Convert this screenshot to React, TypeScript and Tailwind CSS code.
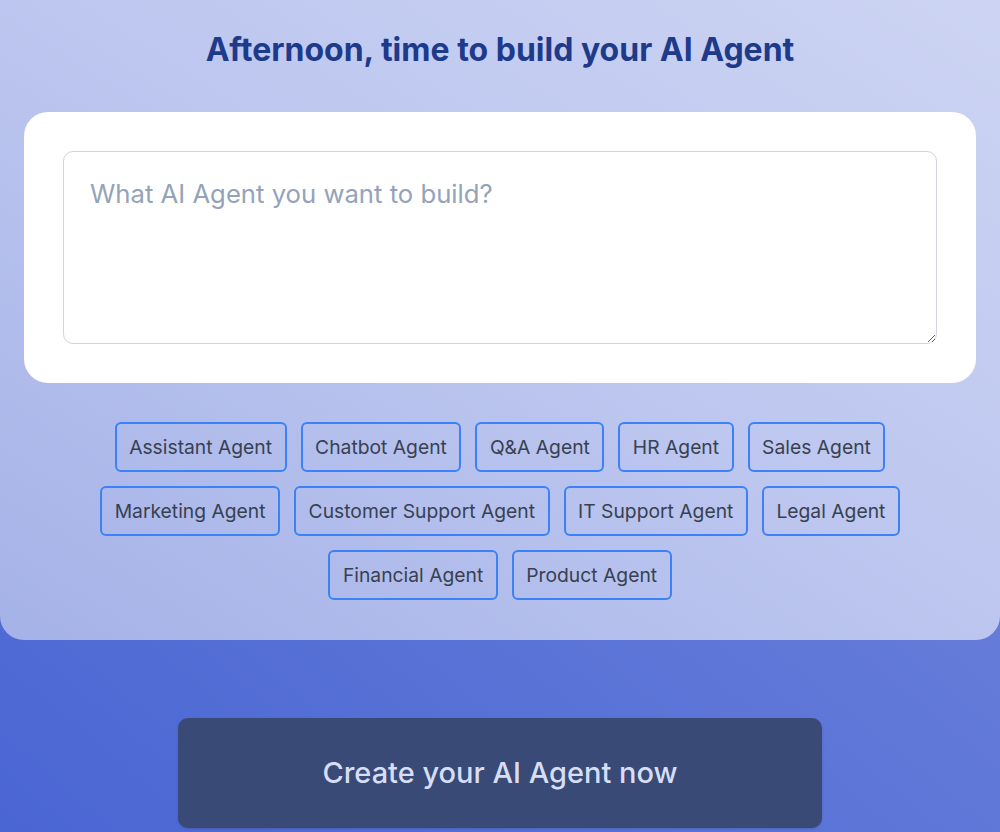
const agents = [
  'Assistant Agent',
  'Chatbot Agent',
  'Q&A Agent',
  'HR Agent',
  'Sales Agent',
  'Marketing Agent',
  'Customer Support Agent',
  'IT Support Agent',
  'Legal Agent',
  'Financial Agent',
  'Product Agent',
]

function AgentChip({ label }: { label: string }) {
  return (
    <button
      type="button"
      className="rounded-md border-2 border-[#3b82f6] px-[12.5px] py-[9px] text-[19.3px] leading-7 text-[#374151]"
    >
      {label}
    </button>
  )
}

export default function App() {
  return (
    <div
      className="min-h-[832px] w-full overflow-hidden bg-gradient-to-tr from-[#4a66d3] to-[#7588dc]"
      style={{ fontFamily: 'Inter, "Noto Sans", sans-serif' }}
    >
      <div className="flex flex-col items-center rounded-b-3xl bg-gradient-to-bl from-[#cdd4f3] via-[#bcc6ef] to-[#a5b2e7] px-6 pb-[40px] pt-[30px]">
        <h1 className="text-[32px] font-bold leading-10 text-[#1e3a8a]">
          Afternoon, time to build your AI Agent
        </h1>

        <div className="mt-[42px] w-full rounded-3xl bg-white p-[39px]">
          <textarea
            className="block h-[193px] w-full rounded-[10px] border border-[#d1d5db] px-[26px] py-[26px] text-[25.7px] leading-8 text-gray-700 outline-none placeholder:text-[#94a3b8]"
            placeholder="What AI Agent you want to build?"
          />
        </div>

        <div className="mt-[39px] flex max-w-[860px] flex-wrap justify-center gap-x-[14px] gap-y-[14px]">
          {agents.map(a => (
            <AgentChip key={a} label={a} />
          ))}
        </div>
      </div>

      <div className="flex justify-center pt-[78px]">
        <button
          type="button"
          className="h-[110px] w-[644px] rounded-[10px] bg-[#3a4a77] text-[29px] font-medium text-[#d6def5] shadow-sm"
        >
          Create your AI Agent now
        </button>
      </div>
    </div>
  )
}
